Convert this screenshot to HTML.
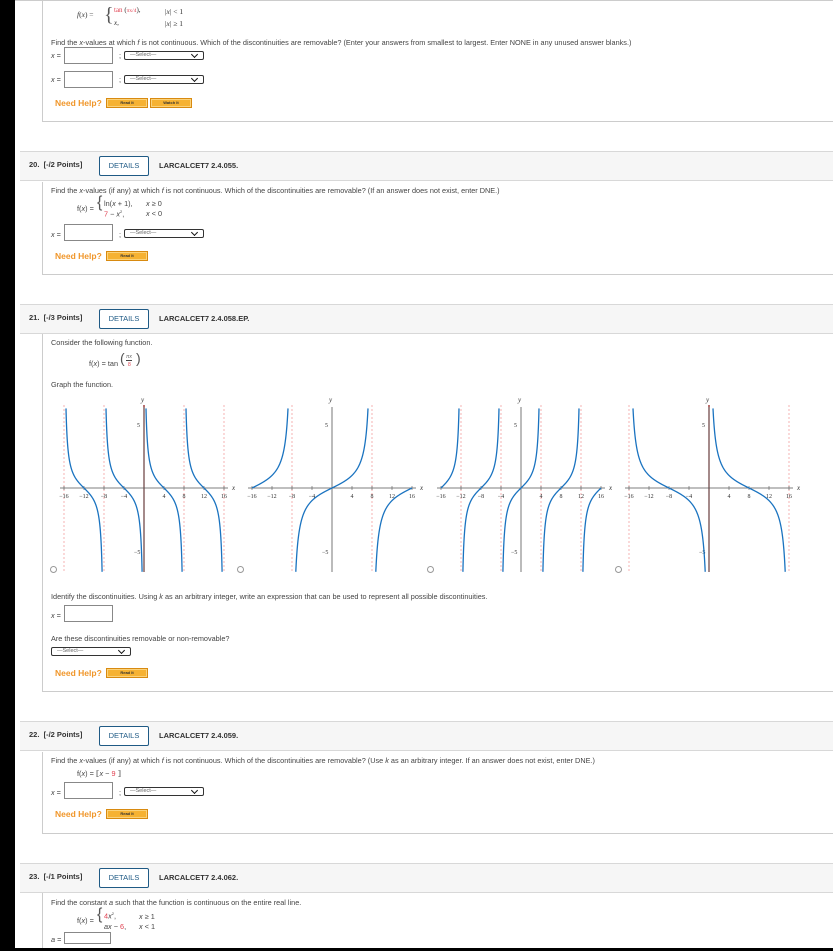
<!DOCTYPE html>
<html><head><meta charset="utf-8">
<style>
*{margin:0;padding:0;box-sizing:border-box}
body{width:833px;height:951px;position:relative;overflow:hidden;background:#fff;font-family:"Liberation Sans",sans-serif;color:#333}
.a{position:absolute;white-space:nowrap}
.t{font-size:7.3px;color:#444}
.blk{position:absolute;background:#000;z-index:5}
.hdr{position:absolute;left:20px;width:813px;height:30px;background:#f6f6f6;border-top:1px solid #d8d8d8;border-bottom:1px solid #d8d8d8}
.hdr .n{position:absolute;left:9px;top:8px;font-size:7.5px;font-weight:bold;color:#333}
.hdr .det{position:absolute;left:79px;top:4px;width:50px;height:20px;border:1px solid #1f5a85;border-radius:2px;background:#fff;color:#1f5a85;font-size:7.5px;text-align:center;line-height:18px}
.hdr .c{position:absolute;left:139px;top:9px;font-size:7.5px;font-weight:bold;color:#333}
.box{position:absolute;left:42px;width:791px;border-left:1px solid #ccc;border-bottom:1px solid #ccc}
.in{position:absolute;width:49px;height:17px;border:1px solid #888;background:#fff}
.sel{position:absolute;width:80px;height:9px;border:1px solid #333;border-radius:2px;font-size:5.5px;color:#666;line-height:7px;padding-left:5px;background:#fff}
.sel:after{content:"";position:absolute;right:6px;top:0px;width:4px;height:4px;border-right:1.6px solid #111;border-bottom:1.6px solid #111;transform:rotate(45deg)}
.nh{position:absolute;font-size:8.5px;font-weight:bold;color:#f0962a}
.btn{position:absolute;width:42px;height:10px;background:#f6b233;border:1px solid #d88a10;box-shadow:inset 0 0 0 1px #fbd27a;font-size:4px;font-weight:bold;color:#333;text-align:center;line-height:8px}
.r{color:#e04050}
.rad{position:absolute;width:7px;height:7px;border:1px solid #999;border-radius:50%;background:#fff}
i{font-style:italic}
.br{font-size:16px;position:absolute;color:#555;font-weight:100}
</style></head><body>
<div class="blk" style="left:0;top:0;width:15px;height:951px"></div>
<div class="blk" style="left:0;top:948px;width:833px;height:3px"></div>
<div style="position:absolute;left:15px;top:0;width:818px;height:1px;background:#ccc"></div>

<!-- section 19 -->
<div class="box" style="top:0;height:122px"></div>
<div class="a" style="left:77px;top:10px;font-family:'Liberation Serif',serif;font-size:7.5px"><i>f</i>(<i>x</i>) =</div>
<div class="a" style="left:104px;top:4px;font-size:20px;color:#555;font-family:'Liberation Serif',serif">{</div>
<div class="a" style="left:114px;top:6px;font-family:'Liberation Serif',serif;font-size:7px"><span class="r">tan</span> (<span class="r" style="font-size:5.5px">πx/4</span>),</div>
<div class="a" style="left:114px;top:19px;font-family:'Liberation Serif',serif;font-size:7px"><i>x</i>,</div>
<div class="a" style="left:165px;top:7px;font-family:'Liberation Serif',serif;font-size:7.5px">|<i>x</i>| &lt; 1</div>
<div class="a" style="left:165px;top:19px;font-family:'Liberation Serif',serif;font-size:7.5px">|<i>x</i>| ≥ 1</div>
<div class="a t" style="left:51px;top:38px">Find the <i>x</i>-values at which <i>f</i> is not continuous. Which of the discontinuities are removable? (Enter your answers from smallest to largest. Enter NONE in any unused answer blanks.)</div>
<div class="a t" style="left:51px;top:51px"><i>x</i> =</div>
<div class="in" style="left:64px;top:47px"></div>
<div class="a t" style="left:119px;top:51px">;</div>
<div class="sel" style="left:124px;top:51px">—Select—</div>
<div class="a t" style="left:51px;top:75px"><i>x</i> =</div>
<div class="in" style="left:64px;top:71px"></div>
<div class="a t" style="left:119px;top:75px">;</div>
<div class="sel" style="left:124px;top:75px">—Select—</div>
<div class="nh" style="left:55px;top:98px">Need Help?</div>
<div class="btn" style="left:106px;top:98px">Read It</div>
<div class="btn" style="left:150px;top:98px">Watch It</div>

<!-- section 20 -->
<div class="hdr" style="top:151px"><span class="n">20.&nbsp; [-/2 Points]</span><span class="det">DETAILS</span><span class="c">LARCALCET7 2.4.055.</span></div>
<div class="box" style="top:182px;height:93px"></div>
<div class="a t" style="left:51px;top:186px">Find the <i>x</i>-values (if any) at which <i>f</i> is not continuous. Which of the discontinuities are removable? (If an answer does not exist, enter DNE.)</div>
<div class="a t" style="left:77px;top:204px">f(<i>x</i>) =</div>
<div class="br" style="left:97px;top:194px">{</div>
<div class="a t" style="left:104px;top:199px">ln(<i>x</i> + 1),</div>
<div class="a t" style="left:104px;top:209px"><span class="r">7</span> − <i>x</i><sup style="font-size:4px">2</sup>,</div>
<div class="a t" style="left:146px;top:199px"><i>x</i> ≥ 0</div>
<div class="a t" style="left:146px;top:209px"><i>x</i> &lt; 0</div>
<div class="a t" style="left:51px;top:230px"><i>x</i> =</div>
<div class="in" style="left:64px;top:224px"></div>
<div class="a t" style="left:119px;top:230px">;</div>
<div class="sel" style="left:124px;top:229px">—Select—</div>
<div class="nh" style="left:55px;top:251px">Need Help?</div>
<div class="btn" style="left:106px;top:251px">Read It</div>

<!-- section 21 -->
<div class="hdr" style="top:304px"><span class="n">21.&nbsp; [-/3 Points]</span><span class="det">DETAILS</span><span class="c">LARCALCET7 2.4.058.EP.</span></div>
<div class="box" style="top:334px;height:358px"></div>
<div class="a t" style="left:51px;top:338px">Consider the following function.</div>
<div class="a t" style="left:89px;top:359px">f(<i>x</i>) = tan</div>
<div class="br" style="left:120px;top:350px;font-size:14px">(</div>
<div class="a" style="left:126px;top:354px;font-size:5px;color:#666;border-bottom:1px solid #444;line-height:6px"><i>πx</i></div>
<div class="a r" style="left:128px;top:362px;font-size:5px">8</div>
<div class="br" style="left:136px;top:350px;font-size:14px">)</div>
<div class="a t" style="left:51px;top:380px">Graph the function.</div>
<svg id="g" style="position:absolute;left:0;top:0" width="833" height="951"></svg>
<div class="rad" style="left:50px;top:566px"></div>
<div class="rad" style="left:237px;top:566px"></div>
<div class="rad" style="left:427px;top:566px"></div>
<div class="rad" style="left:615px;top:566px"></div>
<div class="a t" style="left:51px;top:592px">Identify the discontinuities. Using <i>k</i> as an arbitrary integer, write an expression that can be used to represent all possible discontinuities.</div>
<div class="a t" style="left:51px;top:611px"><i>x</i> =</div>
<div class="in" style="left:64px;top:605px"></div>
<div class="a t" style="left:51px;top:634px">Are these discontinuities removable or non-removable?</div>
<div class="sel" style="left:51px;top:647px">—Select—</div>
<div class="nh" style="left:55px;top:668px">Need Help?</div>
<div class="btn" style="left:106px;top:668px">Read It</div>

<!-- section 22 -->
<div class="hdr" style="top:721px"><span class="n">22.&nbsp; [-/2 Points]</span><span class="det">DETAILS</span><span class="c">LARCALCET7 2.4.059.</span></div>
<div class="box" style="top:752px;height:82px"></div>
<div class="a t" style="left:51px;top:756px">Find the <i>x</i>-values (if any) at which <i>f</i> is not continuous. Which of the discontinuities are removable? (Use <i>k</i> as an arbitrary integer. If an answer does not exist, enter DNE.)</div>
<div class="a t" style="left:77px;top:769px">f(<i>x</i>) = ⟦<i>x</i> − <span class="r">9</span> ⟧</div>
<div class="a t" style="left:51px;top:788px"><i>x</i> =</div>
<div class="in" style="left:64px;top:782px"></div>
<div class="a t" style="left:119px;top:788px">;</div>
<div class="sel" style="left:124px;top:787px">—Select—</div>
<div class="nh" style="left:55px;top:809px">Need Help?</div>
<div class="btn" style="left:106px;top:809px">Read It</div>

<!-- section 23 -->
<div class="hdr" style="top:863px"><span class="n">23.&nbsp; [-/1 Points]</span><span class="det">DETAILS</span><span class="c">LARCALCET7 2.4.062.</span></div>
<div class="box" style="top:893px;height:58px"></div>
<div class="a t" style="left:51px;top:898px">Find the constant <i>a</i> such that the function is continuous on the entire real line.</div>
<div class="a t" style="left:77px;top:916px">f(<i>x</i>) =</div>
<div class="br" style="left:97px;top:906px">{</div>
<div class="a t" style="left:104px;top:911px"><span class="r">4</span><i>x</i><sup style="font-size:4px">2</sup>,</div>
<div class="a t" style="left:104px;top:922px"><i>ax</i> − <span class="r">6</span>,</div>
<div class="a t" style="left:139px;top:912px"><i>x</i> ≥ 1</div>
<div class="a t" style="left:139px;top:922px"><i>x</i> &lt; 1</div>
<div class="a t" style="left:51px;top:935px"><i>a</i> =</div>
<div class="in" style="left:64px;top:932px;width:47px;height:12px"></div>

<script>
(function(){
var s=document.getElementById('g'),h='';
var oy=488,sy=12.6,sx=5,top=407,bot=572;
var G=[{o:144,f:function(x){return 1/Math.tan(Math.PI*x/8)},as:[-16,-8,0,8,16]},
{o:332,f:function(x){return Math.tan(Math.PI*x/16)},as:[-8,8]},
{o:521,f:function(x){return Math.tan(Math.PI*x/8)},as:[-12,-4,4,12]},
{o:709,f:function(x){return 1/Math.tan(Math.PI*x/16)},as:[-16,0,16]}];
G.forEach(function(g){
 var o=g.o;
 g.as.forEach(function(a){var X=o+a*sx;
  h+='<line x1="'+X+'" y1="'+(top-2)+'" x2="'+X+'" y2="'+(bot)+'" stroke="'+(a==0?'#8b1010':'#f4a0a0')+'" stroke-width="'+(a==0?1.2:0.8)+'" '+(a==0?'':'stroke-dasharray="2,2"')+'/>';});
 h+='<line x1="'+(o-84)+'" y1="'+oy+'" x2="'+(o+84)+'" y2="'+oy+'" stroke="#555" stroke-width="0.8"/>';
 h+='<line x1="'+o+'" y1="'+top+'" x2="'+o+'" y2="'+bot+'" stroke="#555" stroke-width="0.8"/>';
 h+='<text x="'+(o-3)+'" y="'+(top-5)+'" font-size="7" font-style="italic" font-family="Liberation Serif" fill="#333">y</text>';
 h+='<text x="'+(o+88)+'" y="'+(oy+2)+'" font-size="7" font-style="italic" font-family="Liberation Serif" fill="#333">x</text>';
 h+='<text x="'+(o-7)+'" y="'+(oy-61)+'" font-size="6" font-family="Liberation Serif" fill="#333">5</text>';
 h+='<text x="'+(o-10)+'" y="'+(oy+66)+'" font-size="6" font-family="Liberation Serif" fill="#333">−5</text>';
 [-16,-12,-8,-4,4,8,12,16].forEach(function(v){var X=o+v*sx;
  h+='<line x1="'+X+'" y1="'+(oy-2)+'" x2="'+X+'" y2="'+(oy+2)+'" stroke="#555" stroke-width="0.6"/>';
  h+='<text x="'+X+'" y="'+(oy+10)+'" font-size="6" text-anchor="middle" font-family="Liberation Serif" fill="#333">'+(v<0?'−'+(-v):v)+'</text>';});
 var d='',pen=false;
 for(var x=-16;x<=16.001;x+=0.02){
  var near=g.as.some(function(a){return Math.abs(x-a)<0.03});
  var y=g.f(x);
  if(near||!isFinite(y)){pen=false;continue;}
  var Y=oy-y*sy;
  if(Y<top||Y>bot){pen=false;continue;}
  d+=(pen?'L':'M')+(o+x*sx).toFixed(2)+' '+Y.toFixed(2);pen=true;}
 h+='<path d="'+d+'" fill="none" stroke="#1a73c0" stroke-width="1.3"/>';
});
s.innerHTML=h;
})();
</script>
</body></html>
